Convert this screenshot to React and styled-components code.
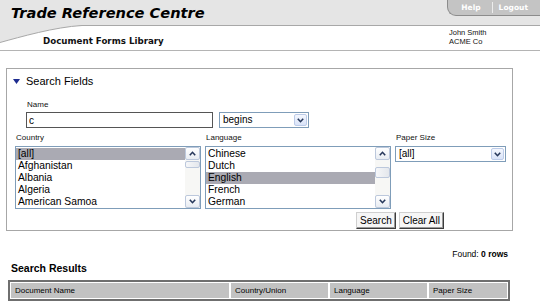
import React from "react";
import styled, { createGlobalStyle } from "styled-components";

const countries = ["[all]", "Afghanistan", "Albania", "Algeria", "American Samoa"];
const languages = ["Chinese", "Dutch", "English", "French", "German"];

const Chevron = ({ up }) => (
	<svg width="7" height="5" viewBox="0 0 7 5">
		<path
			d={up ? "M0.8 4.2 L3.5 1.3 L6.2 4.2" : "M0.8 0.8 L3.5 3.7 L6.2 0.8"}
			fill="none"
			stroke="#26375a"
			strokeWidth="1.6"
		/>
	</svg>
);

const ListBox = ({ items, selected, thumbOffset, thumbSize }) => (
	<ListFrame>
		<ListItems>
			{items.map((item) => (
				<ListItem key={item} $selected={item === selected}>
					{item}
				</ListItem>
			))}
		</ListItems>
		<ScrollBar>
			<ScrollButton>
				<Chevron up />
			</ScrollButton>
			<ScrollThumb $offset={thumbOffset} $size={thumbSize} />
			<ScrollSpacer />
			<ScrollButton>
				<Chevron />
			</ScrollButton>
		</ScrollBar>
	</ListFrame>
);

const Dropdown = ({ value, width }) => (
	<SelectBox $width={width}>
		<SelectValue>{value}</SelectValue>
		<SelectButton>
			<Chevron />
		</SelectButton>
	</SelectBox>
);

const App = () => {
	return (
		<>
			<GlobalStyle />
			<header>
				<TopBar>
					<Title>Trade Reference Centre</Title>
					<UserTab>
						<TabLink href="#">Help</TabLink>
						<TabDivider />
						<TabLink href="#">Logout</TabLink>
					</UserTab>
					<Swoosh width="82" height="18" viewBox="0 0 82 18">
						<path d="M0 0 H82 V0.5 C55 2 20 12 0 17.5 Z" fill="#e5e5e5" />
						<path d="M82 0.5 C55 2 20 12 0 17.5" fill="none" stroke="#a8a8a8" strokeWidth="1" />
					</Swoosh>
				</TopBar>
				<SubBar>
					<Subtitle>Document Forms Library</Subtitle>
					<UserInfo>
						John Smith
						<br />
						ACME Co
					</UserInfo>
				</SubBar>
			</header>

			<Panel>
				<PanelHeader>
					<svg width="7" height="5" viewBox="0 0 7 5">
						<polygon points="0,0 7,0 3.5,5" fill="#1d2c8f" />
					</svg>
					<PanelTitle>Search Fields</PanelTitle>
				</PanelHeader>

				<NameBlock>
					<FieldLabel>Name</FieldLabel>
					<NameRow>
						<TextInput defaultValue="c" />
						<Dropdown value="begins" width={90} />
					</NameRow>
				</NameBlock>

				<FieldsGrid>
					<div>
						<FieldLabel>Country</FieldLabel>
						<ListBox items={countries} selected="[all]" thumbOffset={1} thumbSize={7} />
					</div>
					<div>
						<FieldLabel>Language</FieldLabel>
						<ListBox items={languages} selected="English" thumbOffset={7} thumbSize={11} />
					</div>
					<div>
						<FieldLabel>Paper Size</FieldLabel>
						<Dropdown value="[all]" width={111} />
					</div>
				</FieldsGrid>

				<ButtonRow>
					<Button>Search</Button>
					<Button>Clear All</Button>
				</ButtonRow>
			</Panel>

			<Found>
				Found: <b>0 rows</b>
			</Found>

			<ResultsTitle>Search Results</ResultsTitle>
			<ResultsTable>
				<colgroup>
					<col style={{ width: 220 }} />
					<col style={{ width: 99 }} />
					<col style={{ width: 99 }} />
					<col style={{ width: 80 }} />
				</colgroup>
				<thead>
					<tr>
						<HeadCell>Document Name</HeadCell>
						<HeadCell>Country/Union</HeadCell>
						<HeadCell>Language</HeadCell>
						<HeadCell>Paper Size</HeadCell>
					</tr>
				</thead>
			</ResultsTable>
		</>
	);
};

export default App;

const GlobalStyle = createGlobalStyle`
	html, body {
		margin: 0;
		padding: 0;
		background: #fff;
	}
	body {
		width: 540px;
		height: 304px;
		overflow: hidden;
		font-family: "Liberation Sans", Arial, sans-serif;
		color: #000;
	}
`;

const TopBar = styled.div`
	position: relative;
	height: 25px;
	background: #e5e5e5;
	border-bottom: 1px solid #a8a8a8;
	display: flex;
	justify-content: space-between;
	align-items: flex-start;
`;

const Title = styled.h1`
	margin: 0;
	padding: 1px 0 0 11px;
	font: italic bold 14.6px/24px "DejaVu Sans", Verdana, sans-serif;
	color: #000;
`;

const UserTab = styled.nav`
	display: flex;
	align-items: center;
	height: 15px;
	padding: 0 12px 0 13px;
	background: #c4c4c4;
	border-left: 1px solid #8c8c8c;
	border-bottom: 1px solid #8c8c8c;
	border-bottom-left-radius: 9px;
`;

const TabLink = styled.a`
	font: bold 7.5px/13px "DejaVu Sans", Verdana, sans-serif;
	color: #fff;
	text-decoration: none;
`;

const TabDivider = styled.span`
	width: 1px;
	height: 11px;
	margin: 0 6px 0 11px;
	background: #ececec;
`;

const Swoosh = styled.svg`
	position: absolute;
	left: 0;
	top: 25px;
	overflow: visible;
`;

const SubBar = styled.div`
	display: flex;
	height: 24px;
	border-bottom: 1px solid #b4b4b4;
`;

const Subtitle = styled.h2`
	flex: 1;
	margin: 0;
	padding: 10px 0 0 43px;
	font: bold 8.7px/10px "DejaVu Sans", Verdana, sans-serif;
	color: #111;
`;

const UserInfo = styled.div`
	width: 91px;
	padding-top: 2px;
	font-size: 7.5px;
	line-height: 9px;
	color: #111;
`;

const Panel = styled.section`
	margin: 17px 0 0 6px;
	width: 507px;
	box-sizing: border-box;
	border: 1px solid #a7a7a7;
	padding-bottom: 1px;
`;

const PanelHeader = styled.div`
	display: flex;
	align-items: center;
	gap: 6px;
	padding: 5px 0 0 6px;
	height: 14px;
`;

const PanelTitle = styled.span`
	font-size: 11px;
	line-height: 14px;
`;

const NameBlock = styled.div`
	margin-top: 12px;
	padding-left: 19px;
`;

const FieldLabel = styled.div`
	padding-left: 1px;
	font-size: 8px;
	line-height: 10px;
	color: #111;
`;

const NameRow = styled.div`
	display: flex;
	gap: 6px;
	margin-top: 2px;
`;

const TextInput = styled.input`
	width: 187px;
	height: 16px;
	box-sizing: border-box;
	margin: 0;
	padding: 0 2px;
	border: 1px solid #555;
	font: 10px "Liberation Sans", Arial, sans-serif;
	outline: none;
`;

const SelectBox = styled.div`
	display: flex;
	width: ${(p) => p.$width}px;
	height: 16px;
	box-sizing: border-box;
	border: 1px solid #7f9db9;
	background: #fff;
	margin-top: 3px;

	${NameRow} & {
		margin-top: 0;
	}
`;

const SelectValue = styled.span`
	flex: 1;
	padding-left: 3px;
	font-size: 10px;
	line-height: 14px;
`;

const SelectButton = styled.span`
	display: flex;
	align-items: center;
	justify-content: center;
	width: 13px;
	margin: 1px;
	box-sizing: border-box;
	border: 1px solid #bccbe8;
	border-radius: 2px;
	background: linear-gradient(#f4f7fe, #d9e3f8);
`;

const FieldsGrid = styled.div`
	display: grid;
	grid-template-columns: 186px 186px 111px;
	column-gap: 4px;
	margin-top: 5px;
	padding-left: 8px;
`;

const ListFrame = styled.div`
	display: flex;
	height: 63px;
	margin-top: 3px;
	box-sizing: border-box;
	border: 1px solid #7f9db9;
	background: #fff;
`;

const ListItems = styled.ul`
	flex: 1;
	margin: 0;
	padding: 1px 0 0;
	list-style: none;
	overflow: hidden;
`;

const ListItem = styled.li`
	height: 12px;
	padding-left: 2px;
	font-size: 10.3px;
	line-height: 12px;
	white-space: nowrap;
	background: ${(p) => (p.$selected ? "#aaaab3" : "transparent")};
`;

const ScrollBar = styled.div`
	display: flex;
	flex-direction: column;
	width: 15px;
	background: #f7f7f5;
`;

const ScrollButton = styled.div`
	display: flex;
	align-items: center;
	justify-content: center;
	height: 13px;
	box-sizing: border-box;
	border: 1px solid #bcc8dc;
	border-radius: 2px;
	background: linear-gradient(#ffffff, #e8ecf2);
`;

const ScrollThumb = styled.div`
	margin-top: ${(p) => p.$offset}px;
	height: ${(p) => p.$size}px;
	box-sizing: border-box;
	border: 1px solid #bcc8dc;
	border-radius: 2px;
	background: linear-gradient(90deg, #f6f7f9, #e4e7ec);
`;

const ScrollSpacer = styled.div`
	flex: 1;
`;

const ButtonRow = styled.div`
	display: flex;
	justify-content: flex-end;
	gap: 3px;
	margin-top: 3px;
	padding-right: 68px;
`;

const Button = styled.button`
	height: 17px;
	margin: 0;
	padding: 0 3px;
	font: 10px/13px "Liberation Sans", Arial, sans-serif;
	color: #000;
	background: #f6f6f6;
	border: 1px solid;
	border-color: #cfcfcf #3c3c3c #3c3c3c #cfcfcf;
	box-shadow: inset -1px -1px #9a9a9a;
	border-radius: 0;
`;

const Found = styled.div`
	margin-top: 18px;
	padding-right: 32px;
	text-align: right;
	font-size: 8.5px;
	line-height: 10px;
`;

const ResultsTitle = styled.h3`
	margin: 3px 0 0;
	padding-left: 11px;
	font-size: 10.5px;
	line-height: 13px;
	font-weight: bold;
`;

const ResultsTable = styled.table`
	margin: 5px 0 0 8px;
	width: 502px;
	table-layout: fixed;
	border-collapse: separate;
	border-spacing: 0;
	border: 2px solid #6f6f6f;
`;

const HeadCell = styled.th`
	height: 15px;
	padding: 0 0 0 4px;
	border: 1px solid #fff;
	background: #c2c2c2;
	text-align: left;
	font-weight: normal;
	font-size: 8px;
	line-height: 15px;
	white-space: nowrap;
`;
